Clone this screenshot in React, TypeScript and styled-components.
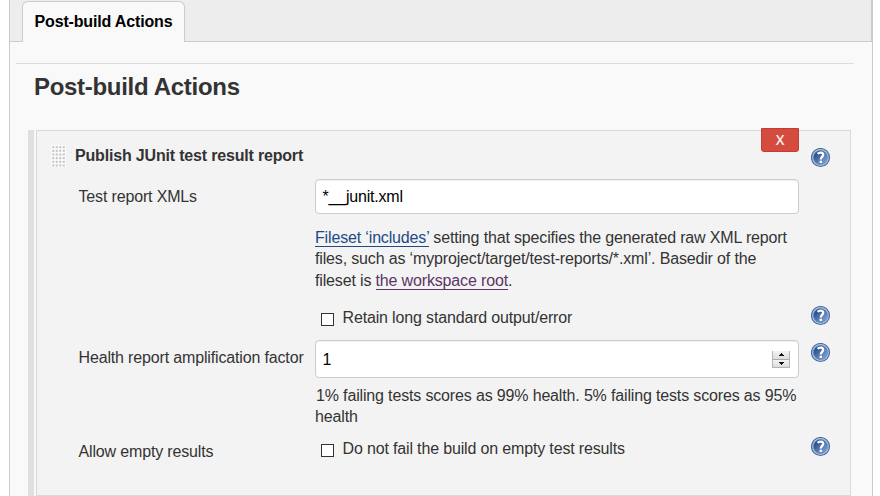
import React from 'react';
import styled, { createGlobalStyle } from 'styled-components';

const GlobalStyle = createGlobalStyle`
  * { box-sizing: border-box; }
  body {
    margin: 0;
    background: #fff;
    color: #333;
    font: 16px/21px "Liberation Sans", Arial, sans-serif;
    letter-spacing: -0.155px;
    overflow: hidden;
  }
`;

const Page = styled.main`
  width: 864px;
  height: 496px;
  margin-left: 9px;
  background: #f9f9f9;
  border: solid #ccc;
  border-width: 0 1px;
  overflow: hidden;
`;

const TabBar = styled.nav`
  height: 42px;
  padding: 1px 0 0 12px;
  background: #ededed;
  border-bottom: 1px solid #ccc;
  border-right: 1px solid #ccc;
`;

const Tab = styled.div`
  width: 163px;
  height: 41px;
  padding: 9px 0 0 11.5px;
  background: #f9f9f9;
  border: 1px solid #ccc;
  border-bottom: 0;
  border-radius: 6px 6px 0 0;
  color: #000;
  font-weight: bold;
  white-space: nowrap;
`;

const Divider = styled.hr`
  width: 838px;
  height: 1px;
  margin: 21px 0 0 6px;
  border: 0;
  background: #ddd;
`;

const SectionTitle = styled.h1`
  height: 66px;
  margin: 0;
  padding: 9px 0 0 24px;
  font-size: 24px;
  line-height: 28px;
  letter-spacing: -0.3px;
`;

const Chunk = styled.section`
  display: flex;
  gap: 2px;
  height: 366px;
  margin-left: 18px;
`;

const Rail = styled.div`
  width: 6px;
  background: #e0e0e0;
`;

const Panel = styled.div`
  width: 815px;
  padding-left: 14px;
  background: #f3f3f3;
  border: 1px solid #d9d9d9;
`;

const Row = styled.div<{ $h: number }>`
  display: grid;
  grid-template-columns: 264px 484px 20px;
  height: ${p => p.$h}px;
`;

const Label = styled.div<{ $top: number }>`
  padding: ${p => p.$top}px 0 0 27.5px;
  white-space: nowrap;
`;

const TitleCell = styled.div`
  display: flex;
  gap: 9px;
  padding-top: 14px;
  font-weight: bold;
  letter-spacing: -0.18px;
  white-space: nowrap;
`;

const HelpButton = styled.div<{ $top: number }>`
  width: 20px;
  height: 20px;
  margin: ${p => p.$top}px 0 0 12px;
  svg { display: block; }
`;

const DeleteButton = styled.button`
  justify-self: end;
  width: 38px;
  height: 24px;
  margin-top: -3px;
  padding: 0;
  background: #d54c3e;
  border: 1px solid #c43c35;
  border-radius: 0 0 3px 3px;
  color: #f6eeee;
  font: 600 14px/22px "Open Sans", sans-serif;
`;

const Field = styled.div<{ $h: number }>`
  display: flex;
  align-items: center;
  justify-content: space-between;
  height: ${p => p.$h}px;
  padding: 0 8px 0 6.5px;
  background: #fff;
  border: 1px solid #ccc;
  border-radius: 4px;
  box-shadow: inset 0 1px 1px rgba(0, 0, 0, 0.06);
  color: #000;
  letter-spacing: -0.2px;
`;

const Hint = styled.p<{ $top: number; $indent?: number }>`
  margin: ${p => p.$top}px 0 0;
  line-height: 21.4px;
  text-indent: ${p => p.$indent ?? 0}px;
  white-space: nowrap;
`;

const Link = styled.span<{ $visited?: boolean }>`
  color: ${p => (p.$visited ? '#5c3566' : '#204a87')};
  border-bottom: 1px solid currentColor;
`;

const CheckLine = styled.div<{ $top: number }>`
  display: flex;
  gap: 8.5px;
  padding: ${p => p.$top}px 0 0 6px;
  white-space: nowrap;
`;

const Box = styled.span`
  width: 13px;
  height: 13px;
  margin-top: 6px;
  background: #fff;
  border: 1px solid #333;
`;

const Spinner = styled.div`
  display: grid;
  grid-template-rows: 8px 7px;
  width: 18px;
  height: 17px;
  background: #aaa;
  border: 1px solid #b4b4b4;
  border-top: 0;
  row-gap: 1px;
`;

const SpinHalf = styled.div`
  display: flex;
  align-items: center;
  justify-content: center;
  background: linear-gradient(#f3f3f3, #ddd);
`;

const Arrow = ({ down = false }: { down?: boolean }) => (
  <SpinHalf>
    <svg width="5" height="3" viewBox="0 0 5 3" shapeRendering="crispEdges">
      <path d={down ? 'M0 0h5v1h-1v1h-1v1h-1v-1h-1v-1h-1z' : 'M2 0h1v1h1v1h1v1h-5v-1h1v-1h1z'} fill="#111" />
    </svg>
  </SpinHalf>
);

const Help = ({ top }: { top: number }) => (
  <HelpButton $top={top}>
    <svg width="20" height="20" viewBox="0 0 20 20">
      <defs>
        <linearGradient id="help-fill" x1="0" y1="0" x2="1" y2="1">
          <stop offset="0.15" stopColor="#234a89" />
          <stop offset="0.85" stopColor="#7b9ece" />
        </linearGradient>
      </defs>
      <circle cx="9.5" cy="9.5" r="9" fill="#b3c5df" stroke="#446ca5" strokeWidth="1.2" />
      <circle cx="9.5" cy="9.5" r="7" fill="url(#help-fill)" stroke="#5b7eb2" strokeWidth="0.7" />
      <path d="M6.7 5.8C8 4 12.2 4 12.2 6.8C12.2 8.9 9.8 8.8 9.8 11.4" fill="none" stroke="#fff" strokeWidth="2.3" />
      <path d="M8.6 12.7h2.4v2.2H8.6z" fill="#fff" />
    </svg>
  </HelpButton>
);

const gripRows = [0, 1, 2, 3, 4, 5];
const gripColumns = [0, 1, 2, 3];

const Grip = () => (
  <svg width="15" height="22" viewBox="0 0 15 22">
    <path d="M0 0h15v22H0z" fill="#fafafa" />
    {gripRows.map(r =>
      gripColumns.map(c => (
        <path
          key={`${r}-${c}`}
          d={`M${1.3 + c * 3.5} ${1.2 + r * 3.65}h2v2h-2z`}
          fill="#c4c4c2"
        />
      )),
    )}
  </svg>
);

export default function App() {
  return (
    <>
      <GlobalStyle />
      <Page>
        <TabBar>
          <Tab>Post-build Actions</Tab>
        </TabBar>
        <Divider />
        <SectionTitle>Post-build Actions</SectionTitle>
        <Chunk>
          <Rail />
          <Panel>
            <Row $h={48}>
              <TitleCell>
                <Grip />
                Publish JUnit test result report
              </TitleCell>
              <DeleteButton>X</DeleteButton>
              <Help top={17} />
            </Row>
            <Row $h={125}>
              <Label $top={7}>Test report XMLs</Label>
              <div>
                <Field $h={35}>*__junit.xml</Field>
                <Hint $top={13}>
                  <Link>Fileset ‘includes’</Link> setting that specifies the generated raw XML report
                  <br />
                  files, such as ‘myproject/target/test-reports/*.xml’. Basedir of the
                  <br />
                  fileset is <Link $visited>the workspace root</Link>.
                </Hint>
              </div>
            </Row>
            <Row $h={36}>
              <div />
              <CheckLine $top={3}>
                <Box />
                Retain long standard output/error
              </CheckLine>
              <Help top={2} />
            </Row>
            <Row $h={96}>
              <Label $top={7}>Health report amplification factor</Label>
              <div>
                <Field $h={38}>
                  1
                  <Spinner>
                    <Arrow />
                    <Arrow down />
                  </Spinner>
                </Field>
                <Hint $top={7} $indent={1}>
                  1% failing tests scores as 99% health. 5% failing tests scores as 95%
                  <br />
                  health
                </Hint>
              </div>
              <Help top={3} />
            </Row>
            <Row $h={58}>
              <Label $top={5}>Allow empty results</Label>
              <CheckLine $top={2}>
                <Box />
                Do not fail the build on empty test results
              </CheckLine>
              <Help top={1} />
            </Row>
          </Panel>
        </Chunk>
      </Page>
    </>
  );
}
